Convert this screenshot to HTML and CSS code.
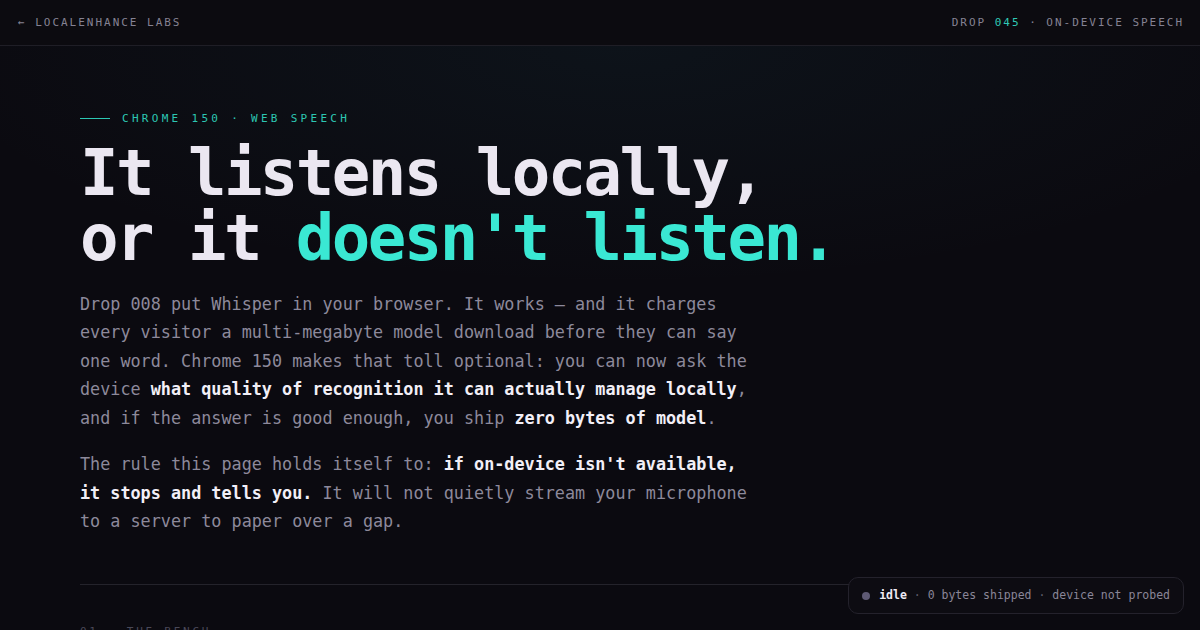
FILE: index.html
```html
<!DOCTYPE html>
<html lang="en">
<head>
<meta charset="utf-8">
<title>Drop 045 · On-device speech</title>
<link rel="stylesheet" href="styles.css">
</head>
<body>
<header class="topbar">
  <a class="brand" href="#">← LOCALENHANCE LABS</a>
  <div class="drop">DROP <span class="num">045</span> · ON-DEVICE SPEECH</div>
</header>
<main class="hero">
  <div class="eyebrow"><span class="eyebrow-line"></span><span>CHROME 150 · WEB SPEECH</span></div>
  <h1 class="title">It listens locally,<br>or it <span class="accent">doesn't listen.</span></h1>
  <p class="lede">Drop 008 put Whisper in your browser. It works — and it charges every visitor a multi-megabyte model download before they can say one word. Chrome 150 makes that toll optional: you can now ask the device <strong>what quality of recognition it can actually manage locally</strong>, and if the answer is good enough, you ship <strong>zero bytes of model</strong>.</p>
  <p class="lede">The rule this page holds itself to: <strong>if on-device isn't available, it stops and tells you.</strong> It will not quietly stream your microphone to a server to paper over a gap.</p>
  <hr class="rule">
  <div class="section-label">01 · THE BENCH</div>
</main>
<div class="status">
  <span class="dot"></span>
  <span class="status-text"><b>idle</b> <span class="sep">·</span> 0 bytes shipped <span class="sep">·</span> device not probed</span>
</div>
</body>
</html>
```
FILE: styles.css
```css
html, body {
  margin: 0;
  padding: 0;
}
body {
  background: #0b0a10;
  color: #8d899b;
  font-family: "DejaVu Sans Mono", "Liberation Mono", monospace;
  height: 630px;
  overflow: hidden;
}
.topbar {
  height: 45px;
  display: flex;
  align-items: center;
  justify-content: space-between;
  padding: 0 16px 0 18px;
  border-bottom: 1px solid #1f1e26;
  background: #0c0b10;
  font-size: 11px;
  letter-spacing: 0.18em;
  color: #858293;
}
.brand {
  color: #858293;
  text-decoration: none;
}
.drop .num {
  color: #2fc9b5;
}
.hero {
  padding: 64px 80px 0;
  background: radial-gradient(ellipse 700px 240px at 52% 0, rgba(40, 130, 150, 0.075), rgba(40, 130, 150, 0) 100%);
}
.eyebrow {
  display: flex;
  align-items: center;
  gap: 12px;
  height: 16px;
  font-size: 11px;
  letter-spacing: 0.3em;
  color: #2cc7b3;
}
.eyebrow-line {
  width: 30px;
  height: 1px;
  background: #2cc7b3;
}
.title {
  margin: 15px 0 0;
  font-size: 64px;
  line-height: 1.02;
  letter-spacing: -0.04em;
  font-weight: 700;
  color: #ebe7f1;
}
.accent {
  color: #3ae8d3;
}
.lede {
  max-width: 680px;
  margin: 18px 0 0;
  font-size: 16.8px;
  line-height: 1.7;
  color: #8d899b;
}
.lede strong {
  color: #f2eff7;
  font-weight: 700;
}
.rule {
  margin: 48px 0 0;
  border: 0;
  border-top: 1px solid #24232b;
  height: 0;
}
.section-label {
  margin-top: 39px;
  font-size: 11px;
  line-height: 16px;
  letter-spacing: 0.25em;
  color: #4a4858;
}
.status {
  position: fixed;
  right: 16px;
  bottom: 16px;
  display: flex;
  align-items: center;
  gap: 9px;
  padding: 10px 13px 10px 13px;
  border: 1px solid #24222c;
  border-radius: 10px;
  background: #0d0c12;
  font-size: 11.5px;
  line-height: 15px;
  color: #8a8698;
}
.dot {
  width: 8px;
  height: 8px;
  border-radius: 50%;
  background: #5e5a74;
}
.status-text b {
  color: #eeebf4;
  font-weight: 700;
}
.status-text .sep {
  color: #5f5c6c;
}
```
